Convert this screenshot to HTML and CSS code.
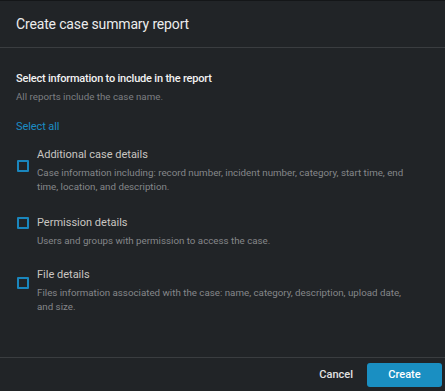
FILE: index.html
```html
<!DOCTYPE html>
<html lang="en">
<head>
    <meta charset="UTF-8">
    <meta name="viewport" content="width=device-width, initial-scale=1.0">
    <title>Create case summary report</title>
    <link rel="stylesheet" href="styles.css">
</head>
<body>
    <div class="dialog">
        <!-- Header -->
        <div class="dialog-header">
            <h1>Create case summary report</h1>
        </div>

        <!-- Body -->
        <div class="dialog-body">
            <h2>Select information to include in the report</h2>
            <p class="hint">All reports include the case name.</p>

            <a href="#" class="select-all">Select all</a>

            <label class="option option-case">
                <span class="check"></span>
                <span class="option-text">
                    <span class="option-title">Additional case details</span>
                    <span class="option-desc">Case information including: record number, incident number, category, start time, end time, location, and description.</span>
                </span>
            </label>

            <label class="option option-permission">
                <span class="check"></span>
                <span class="option-text">
                    <span class="option-title">Permission details</span>
                    <span class="option-desc">Users and groups with permission to access the case.</span>
                </span>
            </label>

            <label class="option option-file">
                <span class="check"></span>
                <span class="option-text">
                    <span class="option-title">File details</span>
                    <span class="option-desc">Files information associated with the case: name, category, description, upload date, and size.</span>
                </span>
            </label>
        </div>

        <!-- Footer -->
        <div class="dialog-footer">
            <button class="btn-cancel">Cancel</button>
            <button class="btn-create">Create</button>
        </div>
    </div>
</body>
</html>
```

FILE: styles.css
```css
* {
    margin: 0;
    padding: 0;
    box-sizing: border-box;
}

body {
    font-family: Roboto, "Liberation Sans", sans-serif;
    background-color: #212427;
    color: #e6e6e6;
}

.dialog {
    height: 391px;
    display: flex;
    flex-direction: column;
    border-top: 1px solid #141618;
}

.dialog-header {
    height: 47px;
    border-bottom: 1px solid #3a3d40;
    display: flex;
    align-items: center;
    padding-left: 16px;
}

.dialog-header h1 {
    font-size: 14px;
    font-weight: 400;
    letter-spacing: -0.15px;
    color: #ececec;
}

.dialog-body {
    flex: 1;
    padding: 23px 30px 0 16px;
}

.dialog-body h2 {
    font-size: 11px;
    font-weight: 500;
    letter-spacing: -0.2px;
    color: #f2f2f2;
    line-height: 16px;
}

.hint {
    font-size: 9.75px;
    color: #7d7f82;
    line-height: 14px;
    margin-top: 3px;
}

.select-all {
    display: inline-block;
    margin-top: 15px;
    font-size: 11px;
    line-height: 16px;
    letter-spacing: -0.1px;
    color: #1b8cc4;
    text-decoration: none;
}

.option {
    display: flex;
    align-items: flex-start;
    cursor: pointer;
}

.option-case {
    margin-top: 12px;
}

.option-permission {
    margin-top: 21px;
}

.option-file {
    margin-top: 19px;
}

.check {
    flex: none;
    width: 12px;
    height: 12px;
    border: 2px solid #1a86bd;
    border-radius: 1px;
    margin: 0 8px 0 1px;
}

.option-case .check {
    margin-top: 13px;
}

.option-permission .check {
    margin-top: 2px;
}

.option-file .check {
    margin-top: 10px;
}

.option-text {
    display: flex;
    flex-direction: column;
}

.option-title {
    font-size: 11px;
    line-height: 16px;
    color: #c9c6c2;
}

.option-desc {
    font-size: 9.75px;
    line-height: 14px;
    color: #85878a;
    margin-top: 3px;
}

.dialog-footer {
    height: 34px;
    border-top: 1px solid #3a3d40;
    display: flex;
    align-items: center;
    justify-content: flex-end;
    padding-right: 3px;
}

.dialog-footer button {
    font-family: Roboto, "Liberation Sans", sans-serif;
    font-size: 11px;
    font-weight: 500;
    border: none;
    cursor: pointer;
}

.btn-cancel {
    background: none;
    color: #e2e2e2;
    margin-right: 14px;
}

.btn-create {
    width: 75px;
    height: 24px;
    background-color: #1a8fc2;
    color: #ffffff;
    border-radius: 3px;
}
```
